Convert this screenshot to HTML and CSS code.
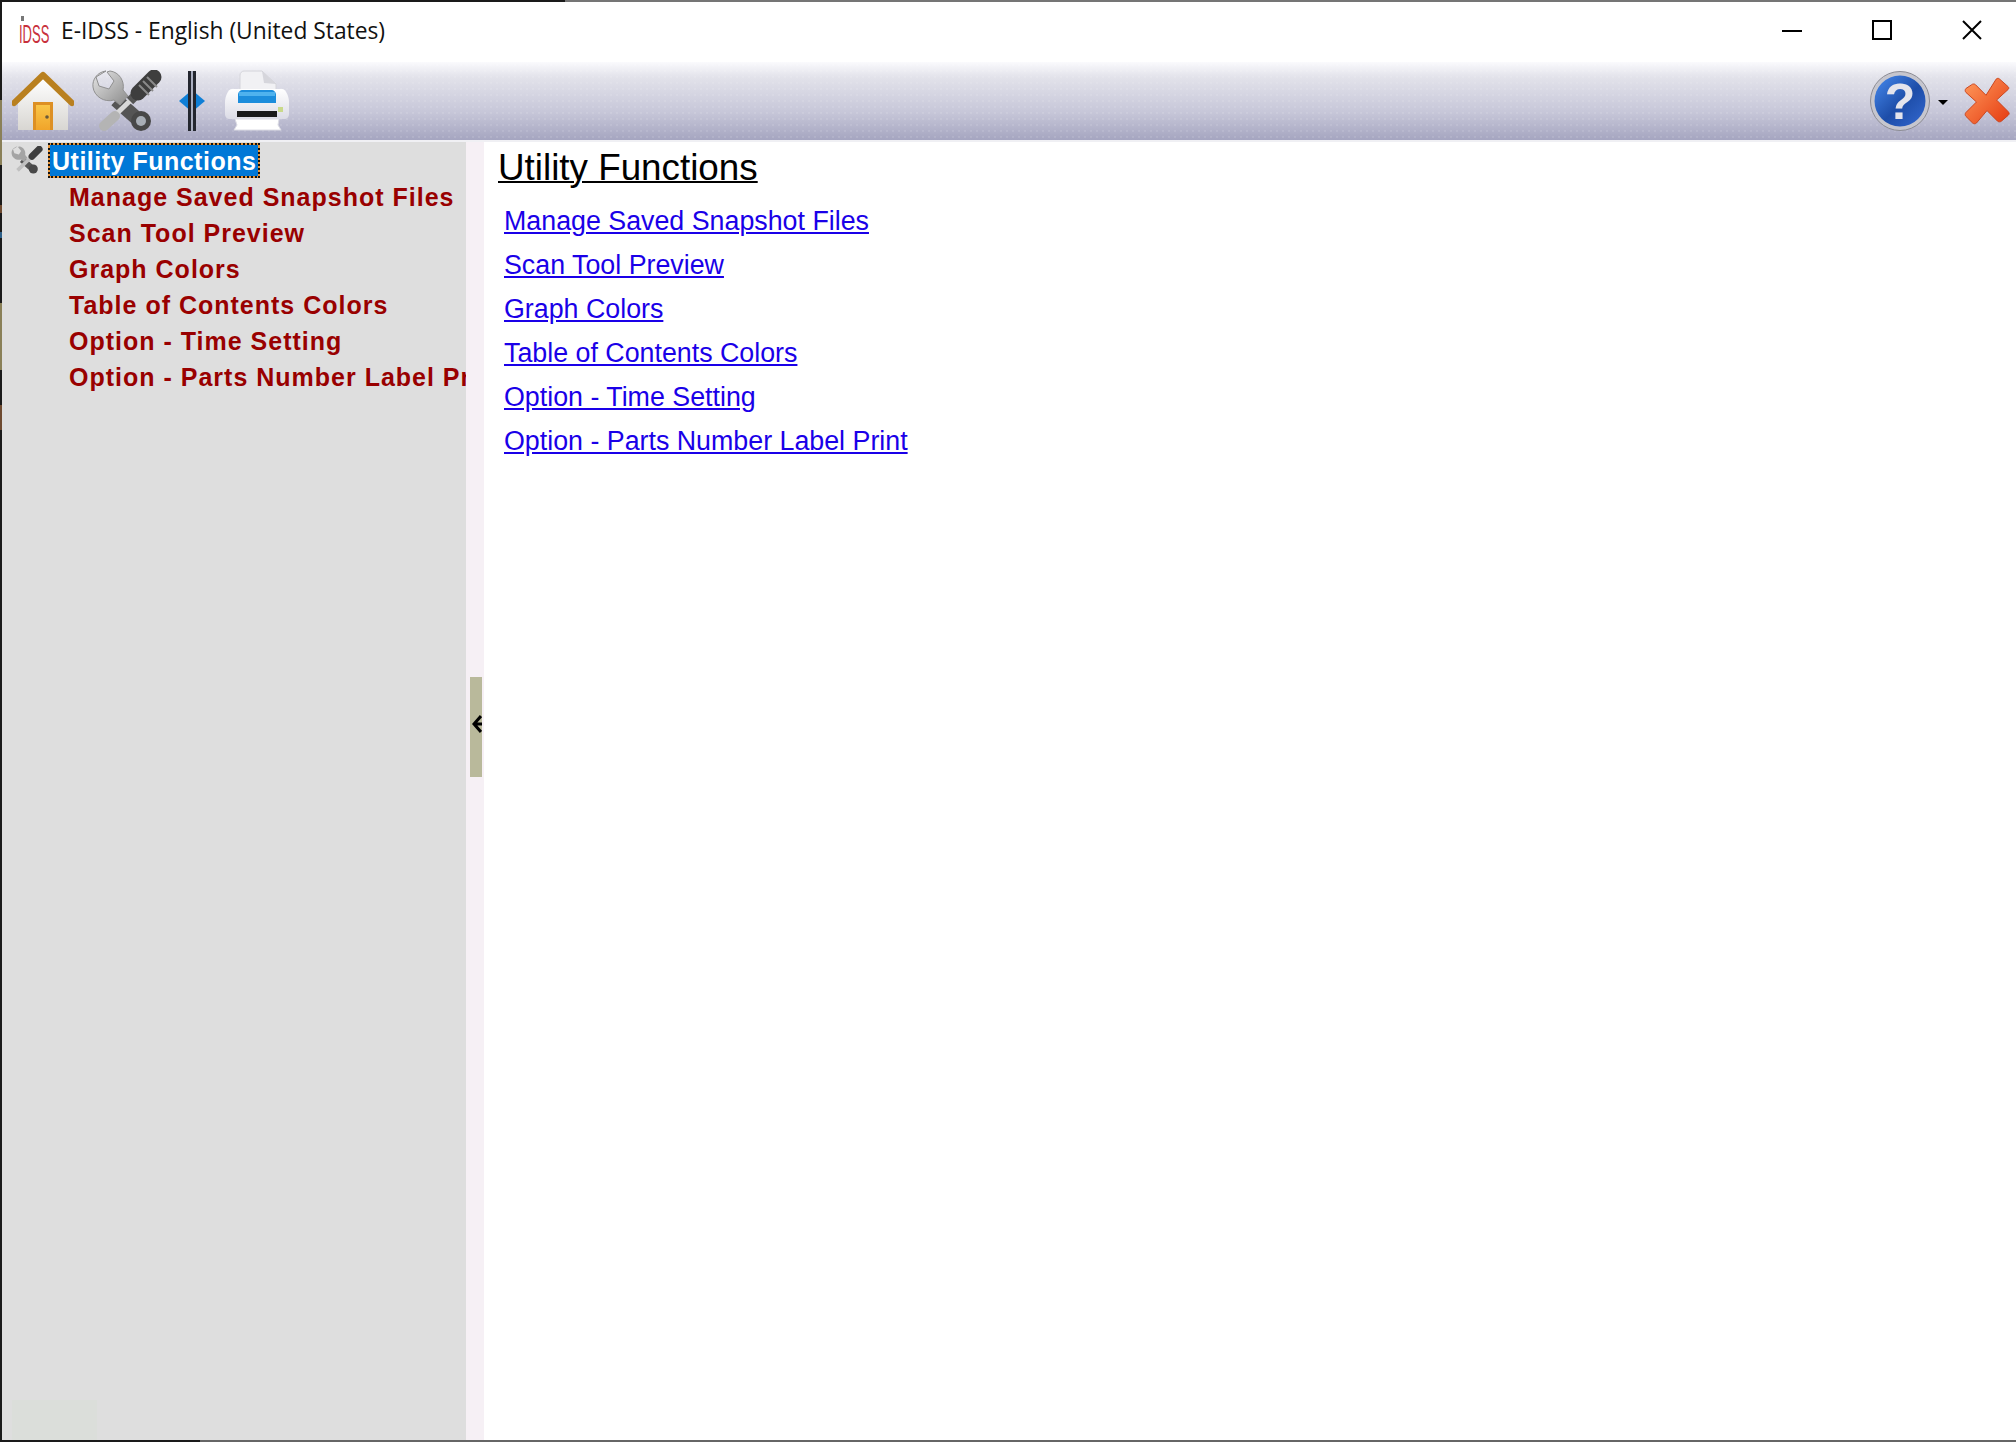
FILE: index.html
```html
<!DOCTYPE html>
<html lang="en">
<head>
<meta charset="utf-8">
<title>E-IDSS - English (United States)</title>
<link rel="stylesheet" href="styles.css">
</head>
<body>
<div class="window">
  <header class="titlebar">
    <div class="app-logo"><span class="logo-dot"></span><span class="logo-text">IDSS</span></div>
    <div class="app-title">E-IDSS - English (United States)</div>
    <div class="win-controls">
      <svg class="win-btn" width="20" height="20" viewBox="0 0 20 20"><path d="M0 11h20" stroke="#000" stroke-width="2"/></svg>
      <svg class="win-btn" width="20" height="20" viewBox="0 0 20 20"><rect x="1" y="1" width="18" height="18" fill="none" stroke="#000" stroke-width="2"/></svg>
      <svg class="win-btn" width="20" height="20" viewBox="0 0 20 20"><path d="M1 1l18 18M19 1L1 19" stroke="#000" stroke-width="2"/></svg>
    </div>
  </header>
  <nav class="toolbar">
    <div class="tool-left">
      <svg class="ic-home" width="62" height="62" viewBox="0 0 62 62">
        <defs>
          <linearGradient id="wall" x1="0" y1="0" x2="0" y2="1"><stop offset="0" stop-color="#fff"/><stop offset="1" stop-color="#d8d6d2"/></linearGradient>
          <linearGradient id="door" x1="0" y1="0" x2="0" y2="1"><stop offset="0" stop-color="#f9c648"/><stop offset="1" stop-color="#f0a42a"/></linearGradient>
        </defs>
        <path d="M6 30L31 8l25 22v30H6z" fill="url(#wall)"/>
        <path d="M2 33L31 5l29 28" fill="none" stroke="#b9801f" stroke-width="6" stroke-linejoin="round" stroke-linecap="round"/>
        <rect x="21" y="32" width="20" height="28" fill="#dd9023"/>
        <rect x="24" y="35" width="14" height="25" fill="url(#door)"/>
        <circle cx="35" cy="47" r="1.8" fill="#6a5a3a"/>
      </svg>
      <svg class="ic-tools" width="70" height="62" viewBox="0 0 70 62">
        <defs>
          <linearGradient id="steel" x1="0" y1="0" x2="1" y2="1"><stop offset="0" stop-color="#e6e6e6"/><stop offset="1" stop-color="#8a8a8a"/></linearGradient>
        </defs>
        <path d="M24 30L50 53" stroke="#555" stroke-width="14"/>
        <path d="M14 1C5 2 0 10 1 17c1 9 11 16 21 13l6 5 8-9-5-6c2-9-4-18-13-19l-3 1 7 9-5 8-10-3-3-9z" fill="url(#steel)" stroke="#909090"/>
        <circle cx="49" cy="51" r="10" fill="#484848"/>
        <circle cx="49" cy="51" r="5" fill="#a8aeb6"/>
        <path d="M44 25L14 54" stroke="#d8d8d8" stroke-width="5"/>
        <path d="M23 46L12 56" stroke="#b4b4b4" stroke-width="10" stroke-linecap="round"/>
        <path d="M38 31L44 25" stroke="#555" stroke-width="9"/>
        <path d="M46 23L62 7" stroke="#3e3e3e" stroke-width="15" stroke-linecap="round"/>
        <path d="M47 15l10 10M51 11l10 10M55 7l10 10" stroke="#8a8a8a" stroke-width="2"/>
      </svg>
      <svg class="ic-split" width="26" height="60" viewBox="0 0 26 60">
        <path d="M13 19L0 30l13 11 13-11z" fill="#0f7fd6"/>
        <rect x="9" y="0" width="8" height="60" fill="#23262e"/>
        <rect x="12" y="0" width="2" height="60" fill="#a9aec0"/>
      </svg>
      <svg class="ic-print" width="66" height="62" viewBox="0 0 66 62">
        <defs>
          <linearGradient id="pbody" x1="0" y1="0" x2="0" y2="1"><stop offset="0" stop-color="#fff"/><stop offset="1" stop-color="#dcdce6"/></linearGradient>
        </defs>
        <path d="M16 22V5c0-2 2-4 4-4h18l14 13v8z" fill="#f1f1f4" stroke="#d4d4da"/>
        <path d="M38 1l2 12 12 1z" fill="#d6d6dc"/>
        <path d="M8 19h50c4 0 7 8 7 13v12c0 3-2 5-5 5H6c-3 0-5-2-5-5V32c0-5 3-13 7-13z" fill="url(#pbody)"/>
        <path d="M19 20h28c3 0 5 2 5 5v8H14v-8c0-3 2-5 5-5z" fill="#1c8ddc"/>
        <rect x="15" y="22" width="36" height="4" fill="#4fb2ee"/>
        <rect x="13" y="41" width="40" height="6" fill="#1a1a1a"/>
        <rect x="54" y="37" width="5" height="5" fill="#c9d98a"/>
        <path d="M11 49h44l-1 6 3 5H10l3-5z" fill="#fff" stroke="#dcdce4"/>
      </svg>
    </div>
    <div class="tool-right">
      <svg class="ic-help" width="62" height="62" viewBox="0 0 62 62">
        <defs>
          <linearGradient id="hb" x1="0.1" y1="0.1" x2="0.9" y2="0.9"><stop offset="0" stop-color="#3f7fe2"/><stop offset="0.55" stop-color="#1d4da8"/><stop offset="1" stop-color="#2f63c8"/></linearGradient>
        </defs>
        <circle cx="31" cy="31" r="29.5" fill="#c6c6ce" stroke="#8c8c94" stroke-width="1"/>
        <circle cx="31" cy="31" r="25.5" fill="url(#hb)"/>
        <text class="help-mark" x="31" y="49" text-anchor="middle">?</text>
      </svg>
      <span class="caret"></span>
      <svg class="ic-close" width="46" height="50" viewBox="0 0 48 50">
        <defs>
          <linearGradient id="xg" x1="0" y1="0" x2="1" y2="1"><stop offset="0" stop-color="#ff9a5c"/><stop offset="1" stop-color="#e53a10"/></linearGradient>
        </defs>
        <path d="M37 2l9 8c1 1 1 2 0 3L34 24l12 12c2 2 1 3 0 4l-7 6c-1 1-3 1-4 0L24 35 13 48c-1 1-3 1-4 0l-7-7c-1-1-1-3 0-4l11-11L2 16c-1-1-1-3 0-4l6-4c1-1 3-1 4 0l11 11L33 3c1-2 3-2 4-1z" fill="url(#xg)" stroke="#c9421a"/>
      </svg>
    </div>
  </nav>
  <div class="main">
    <aside class="tree">
      <div class="tree-root">
        <svg class="ic-tools-small" width="32" height="28" viewBox="0 0 70 62">
          <path d="M24 30L50 53" stroke="#555" stroke-width="14"/>
          <path d="M14 1C5 2 0 10 1 17c1 9 11 16 21 13l6 5 8-9-5-6c2-9-4-18-13-19l-3 1 7 9-5 8-10-3-3-9z" fill="#a4a4a4"/>
          <circle cx="49" cy="51" r="10" fill="#484848"/>
          <path d="M44 25L14 54" stroke="#c0c0c0" stroke-width="8"/>
          <path d="M46 23L62 7" stroke="#3e3e3e" stroke-width="15" stroke-linecap="round"/>
        </svg>
        <span class="tree-selected">Utility Functions</span>
      </div>
      <ul class="tree-list">
        <li>Manage Saved Snapshot Files</li>
        <li>Scan Tool Preview</li>
        <li>Graph Colors</li>
        <li>Table of Contents Colors</li>
        <li>Option - Time Setting</li>
        <li>Option - Parts Number Label Print</li>
      </ul>
    </aside>
    <div class="splitter">
      <div class="split-handle">
        <svg class="split-arrow" width="12" height="18" viewBox="0 0 12 18"><path d="M11 1L4 9l7 8M12 9H4" fill="none" stroke="#000" stroke-width="3"/></svg>
      </div>
    </div>
    <main class="content">
      <h1 class="heading">Utility Functions</h1>
      <ul class="links">
        <li><a href="#">Manage Saved Snapshot Files</a></li>
        <li><a href="#">Scan Tool Preview</a></li>
        <li><a href="#">Graph Colors</a></li>
        <li><a href="#">Table of Contents Colors</a></li>
        <li><a href="#">Option - Time Setting</a></li>
        <li><a href="#">Option - Parts Number Label Print</a></li>
      </ul>
    </main>
  </div>
</div>
</body>
</html>
```
FILE: styles.css
```css
* { box-sizing: border-box; }
html, body { margin: 0; padding: 0; height: 100%; background: #fff; overflow: hidden; }
.window {
  width: 2016px; height: 1442px;
  display: flex; flex-direction: column;
  padding: 2px 0 2px 2px;
  background:
    linear-gradient(90deg, #1a1a1a 565px, #757575 565px) top / 100% 2px no-repeat,
    linear-gradient(90deg, #1a1a1a 200px, #666 200px) bottom / 100% 2px no-repeat,
    linear-gradient(#1a1a1a 100px, #8a8058 100px, #8a8058 165px, #1a1a1a 165px, #1a1a1a 205px, #6e4a30 205px, #6e4a30 213px, #1a1a1a 213px, #1a1a1a 232px, #2c5f88 232px, #2c5f88 238px, #1a1a1a 238px, #1a1a1a 303px, #8a8058 303px, #8a8058 370px, #1a1a1a 370px, #1a1a1a 405px, #6e4a30 405px, #6e4a30 430px, #1a1a1a 430px) left / 2px 100% no-repeat,
    #fff;
}
.titlebar { height: 60px; flex: none; display: flex; align-items: center; padding: 0 0 3px 17px; background: #fff; }
.app-logo { width: 30px; height: 30px; position: relative; margin-right: 11px; }
.logo-dot { position: absolute; left: 2px; top: 0; width: 3px; height: 5px; background: #777; }
.logo-text { position: absolute; left: 0; top: 3px; font: 25px/30px "Liberation Sans", sans-serif; color: #c8303c; transform: scaleX(0.52); transform-origin: left; }
.app-title { font: 22.8px/30px "Open Sans", sans-serif; color: #111; margin-left: 1px; }
.win-controls { margin-left: auto; margin-top: -1px; display: flex; gap: 70px; padding-right: 34px; }
.toolbar {
  height: 80px; flex: none; display: flex; justify-content: space-between; align-items: center;
  background:
    radial-gradient(rgba(255,255,255,.1) 1px, transparent 1.5px) 0 0 / 6px 6px,
    linear-gradient(#fafafd 0%, #e2e2ea 20%, #c6c6d8 65%, #a5a5c0 100%);
  border-bottom: 2px solid #f0f0f4;
}
.tool-left { display: flex; align-items: center; padding-left: 10px; }
.ic-tools { margin-left: 18px; }
.ic-split { margin-left: 17px; }
.ic-print { margin-left: 19px; }
.tool-right { display: flex; align-items: center; padding-right: 6px; }
.help-mark { font: bold 50px "Liberation Sans", sans-serif; fill: #e4e4ec; }
.caret { width: 0; height: 0; border-left: 5px solid transparent; border-right: 5px solid transparent; border-top: 5px solid #000; margin: 2px 16px 0 7px; }
.main { flex: 1; display: flex; min-height: 0; }
.tree {
  width: 464px; flex: none; overflow: hidden; padding-top: 1px;
  background: linear-gradient(#dbdeda, #dbdeda) 10px bottom / 85px 40px no-repeat, #dedede;
}
.tree-root { height: 34px; display: flex; align-items: center; padding-left: 9px; }
.tree-selected {
  margin-left: 5px; height: 35px; padding: 1px 2px 0 2px;
  background: linear-gradient(#0078d7, #0078d7) padding-box, #e8963a border-box;
  border: 2px dotted #111;
  color: #fff;
  font: bold 25px/30px "Liberation Sans", sans-serif; letter-spacing: 0.5px; white-space: nowrap;
}
.tree-list { list-style: none; margin: 0; padding: 2px 0 0 67px; }
.tree-list li { height: 36px; font: bold 25px/36px "Liberation Sans", sans-serif; letter-spacing: 1px; color: #990000; white-space: nowrap; }
.splitter { width: 18px; flex: none; background: #f6f0f5; padding: 535px 0 0 4px; }
.split-handle { width: 12px; height: 100px; background: #b9b99b; display: flex; align-items: center; justify-content: flex-end; }
.split-arrow { margin-bottom: 6px; }
.content { flex: 1; padding: 4px 0 0 14px; background: #fff; }
.heading { margin: 0; font: 400 36.8px/44px "Liberation Sans", sans-serif; color: #000; text-decoration: underline; text-decoration-thickness: 2px; }
.links { list-style: none; margin: 0; padding: 9px 0 0 6px; }
.links li { height: 44px; font: 26.8px/44px "Liberation Sans", sans-serif; }
.links a { color: #1a00e8; text-decoration: underline; }
```
